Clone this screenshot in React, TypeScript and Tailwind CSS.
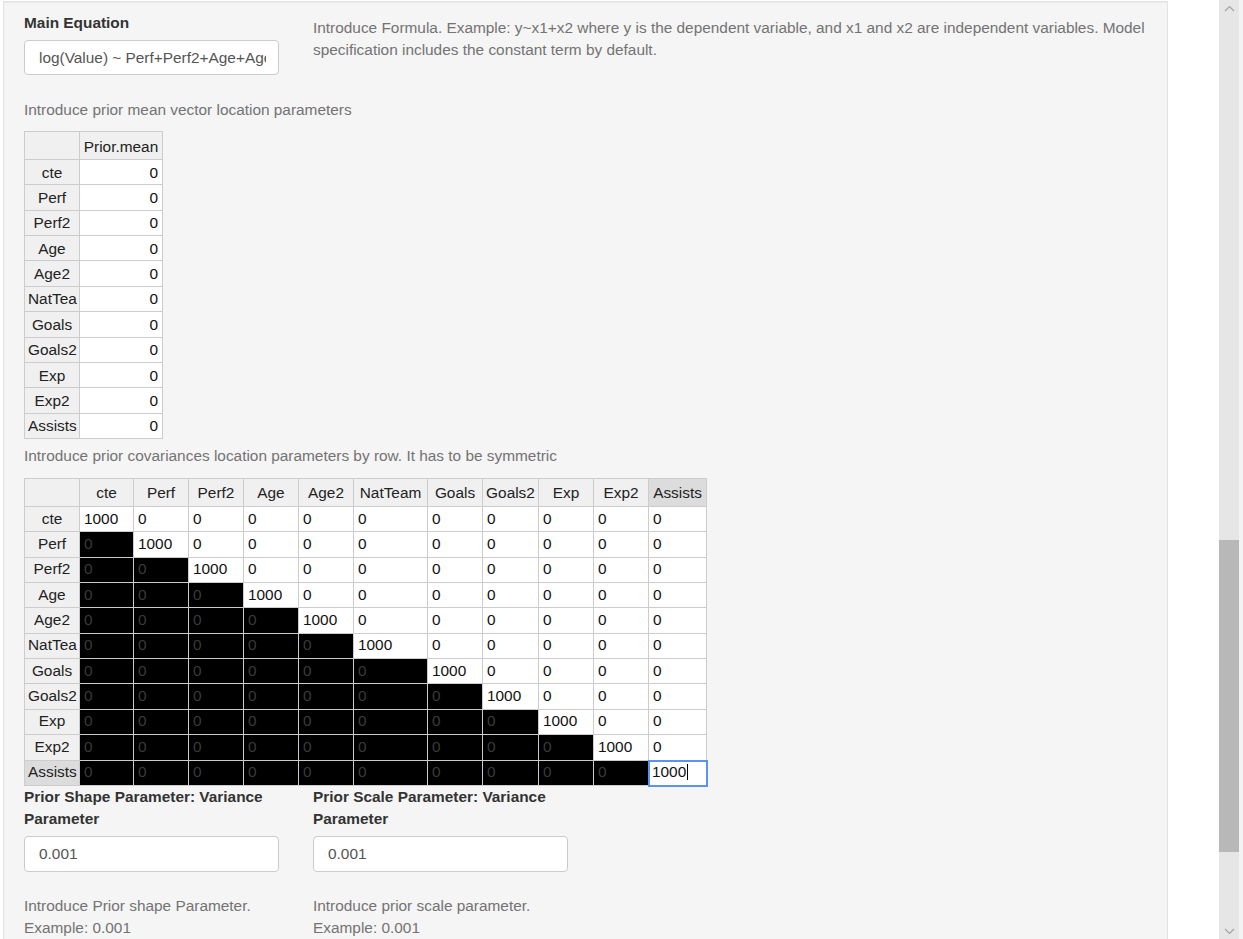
import React from "react";

const names = ["cte", "Perf", "Perf2", "Age", "Age2", "NatTeam", "Goals", "Goals2", "Exp", "Exp2", "Assists"];
const wide = ["NatTeam", "Goals2", "Assists"];

const cellBase = "border-r border-b border-[#cccccc] overflow-hidden whitespace-nowrap flex items-center";

function MeanTable() {
  return (
    <div className="grid w-fit grid-cols-[55px_83px] grid-rows-[28px_repeat(11,25.36px)] border-l border-t border-[#cccccc] text-[15.4px]">
      <div className={`${cellBase} bg-[#f0f0f0]`} />
      <div className={`${cellBase} bg-[#f0f0f0] justify-center pt-[2px] text-[#222]`}>Prior.mean</div>
      {names.map((n) => (
        <React.Fragment key={n}>
          <div
            className={`${cellBase} bg-[#f0f0f0] ${wide.includes(n) ? "justify-start pl-[3px]" : "justify-center"} text-[#222]`}
          >
            {n === "NatTeam" ? "NatTea" : n}
          </div>
          <div className={`${cellBase} bg-white justify-end pr-[4px] text-[#111]`}>0</div>
        </React.Fragment>
      ))}
    </div>
  );
}

function CovTable() {
  return (
    <div className="grid w-fit grid-cols-[55px_54px_55px_55px_55px_55px_74px_55px_56px_55px_55px_58px] grid-rows-[28px_repeat(11,25.36px)] border-l border-t border-[#cccccc] text-[15.4px]">
      <div className={`${cellBase} bg-[#f0f0f0]`} />
      {names.map((n) => (
        <div
          key={"h" + n}
          className={`${cellBase} justify-center text-[#222] ${n === "Assists" ? "bg-[#dcdcdc]" : "bg-[#f0f0f0]"}`}
        >
          {n}
        </div>
      ))}
      {names.map((r, i) => (
        <React.Fragment key={"r" + r}>
          <div
            className={`${cellBase} pb-[2px] ${wide.includes(r) ? "justify-start pl-[3px]" : "justify-center"} text-[#222] ${
              r === "Assists" ? "bg-[#dcdcdc]" : "bg-[#f0f0f0]"
            }`}
          >
            {r === "NatTeam" ? "NatTea" : r}
          </div>
          {names.map((c, j) => {
            const lower = j < i;
            const diag = i === j;
            const selected = diag && i === names.length - 1;
            return (
              <div
                key={r + c}
                className={`${cellBase} pb-[2px] ${selected ? "pl-[3px]" : "pl-[4px]"} ${
                  lower ? "bg-black text-[#3a3a3a]" : "bg-white text-[#111]"
                } ${selected ? "outline-2 outline-[#5b93f5] -outline-offset-1 relative z-10" : ""}`}
              >
                {diag ? "1000" : "0"}
                {selected && <span className="ml-[1px] inline-block h-[16px] w-px bg-black" />}
              </div>
            );
          })}
        </React.Fragment>
      ))}
    </div>
  );
}

function TextInput({ value, h }: { value: string; h: string }) {
  return (
    <input
      readOnly
      value={value}
      className={`w-[255px] ${h} rounded-[4px] border border-[#cccccc] bg-white pl-[14px] pr-[12px] text-[15.4px] text-[#555] outline-none font-['Liberation_Sans',Arial,sans-serif]`}
    />
  );
}

export default function App() {
  return (
    <div className="flex h-[939px] w-[1243px] overflow-hidden bg-white font-['Liberation_Sans',Arial,sans-serif] text-[#333]">
      <div className="w-[1219px] shrink-0 pl-[3px] pt-[1px]">
        <div className="h-[960px] w-[1165px] border border-[#e3e3e3] bg-[#f5f5f5] pl-[20px] pr-[19px] pt-[10px] shadow-[inset_0_1px_1px_rgba(0,0,0,0.05)]">
          <div className="flex gap-[34px]">
            <div className="w-[255px] shrink-0">
              <div className="text-[15.4px] font-bold leading-[22px] text-[#333]">Main Equation</div>
              <div className="mt-[6px]">
                <TextInput
                  h="h-[35px]"
                  value="log(Value) ~ Perf+Perf2+Age+Age2+NatTeam+Goals+Goals2+Exp+Exp2+Assists"
                />
              </div>
            </div>
            <div className="mt-[5px] text-[15.4px] leading-[22px] text-[#737373]">
              <span className="whitespace-nowrap">
                Introduce Formula. Example: y~x1+x2 where y is the dependent variable, and x1 and x2 are independent
                variables. Model
              </span>
              <br />
              <span className="whitespace-nowrap">specification includes the constant term by default.</span>
            </div>
          </div>

          <div className="mt-[24px] text-[15.4px] leading-[22px] text-[#737373]">
            Introduce prior mean vector location parameters
          </div>
          <div className="mt-[10px]">
            <MeanTable />
          </div>

          <div className="mt-[6px] text-[15.4px] leading-[22px] text-[#737373]">
            Introduce prior covariances location parameters by row. It has to be symmetric
          </div>
          <div className="mt-[11px]">
            <CovTable />
          </div>

          <div className="flex gap-[34px]">
            <div className="w-[255px] shrink-0">
              <div className="whitespace-nowrap text-[15.4px] font-bold leading-[22px] text-[#333]">
                Prior Shape Parameter: Variance
                <br />
                Parameter
              </div>
              <div className="mt-[6px]">
                <TextInput h="h-[36px]" value="0.001" />
              </div>
              <div className="mt-[23px] whitespace-nowrap text-[15.4px] leading-[22px] text-[#737373]">
                Introduce Prior shape Parameter.
                <br />
                Example: 0.001
              </div>
            </div>
            <div className="w-[255px] shrink-0">
              <div className="whitespace-nowrap text-[15.4px] font-bold leading-[22px] text-[#333]">
                Prior Scale Parameter: Variance
                <br />
                Parameter
              </div>
              <div className="mt-[6px]">
                <TextInput h="h-[36px]" value="0.001" />
              </div>
              <div className="mt-[23px] whitespace-nowrap text-[15.4px] leading-[22px] text-[#737373]">
                Introduce prior scale parameter.
                <br />
                Example: 0.001
              </div>
            </div>
          </div>
        </div>
      </div>

      <div className="relative h-full w-[20px] shrink-0 bg-[#e6e6e6]">
        <svg className="absolute left-[5px] top-[5px]" width="11" height="7" viewBox="0 0 11 7">
          <polyline points="1,6 5.5,1.5 10,6" fill="none" stroke="#a3a3a3" strokeWidth="1.2" />
        </svg>
        <div className="absolute left-0 top-[540px] h-[312px] w-full bg-[#b8b8b8]" />
        <svg className="absolute bottom-[4px] left-[5px]" width="11" height="7" viewBox="0 0 11 7">
          <polyline points="1,1 5.5,5.5 10,1" fill="none" stroke="#a3a3a3" strokeWidth="1.2" />
        </svg>
      </div>
      <div className="h-full w-[4px] shrink-0 bg-[#f3f3f3]" />
    </div>
  );
}
